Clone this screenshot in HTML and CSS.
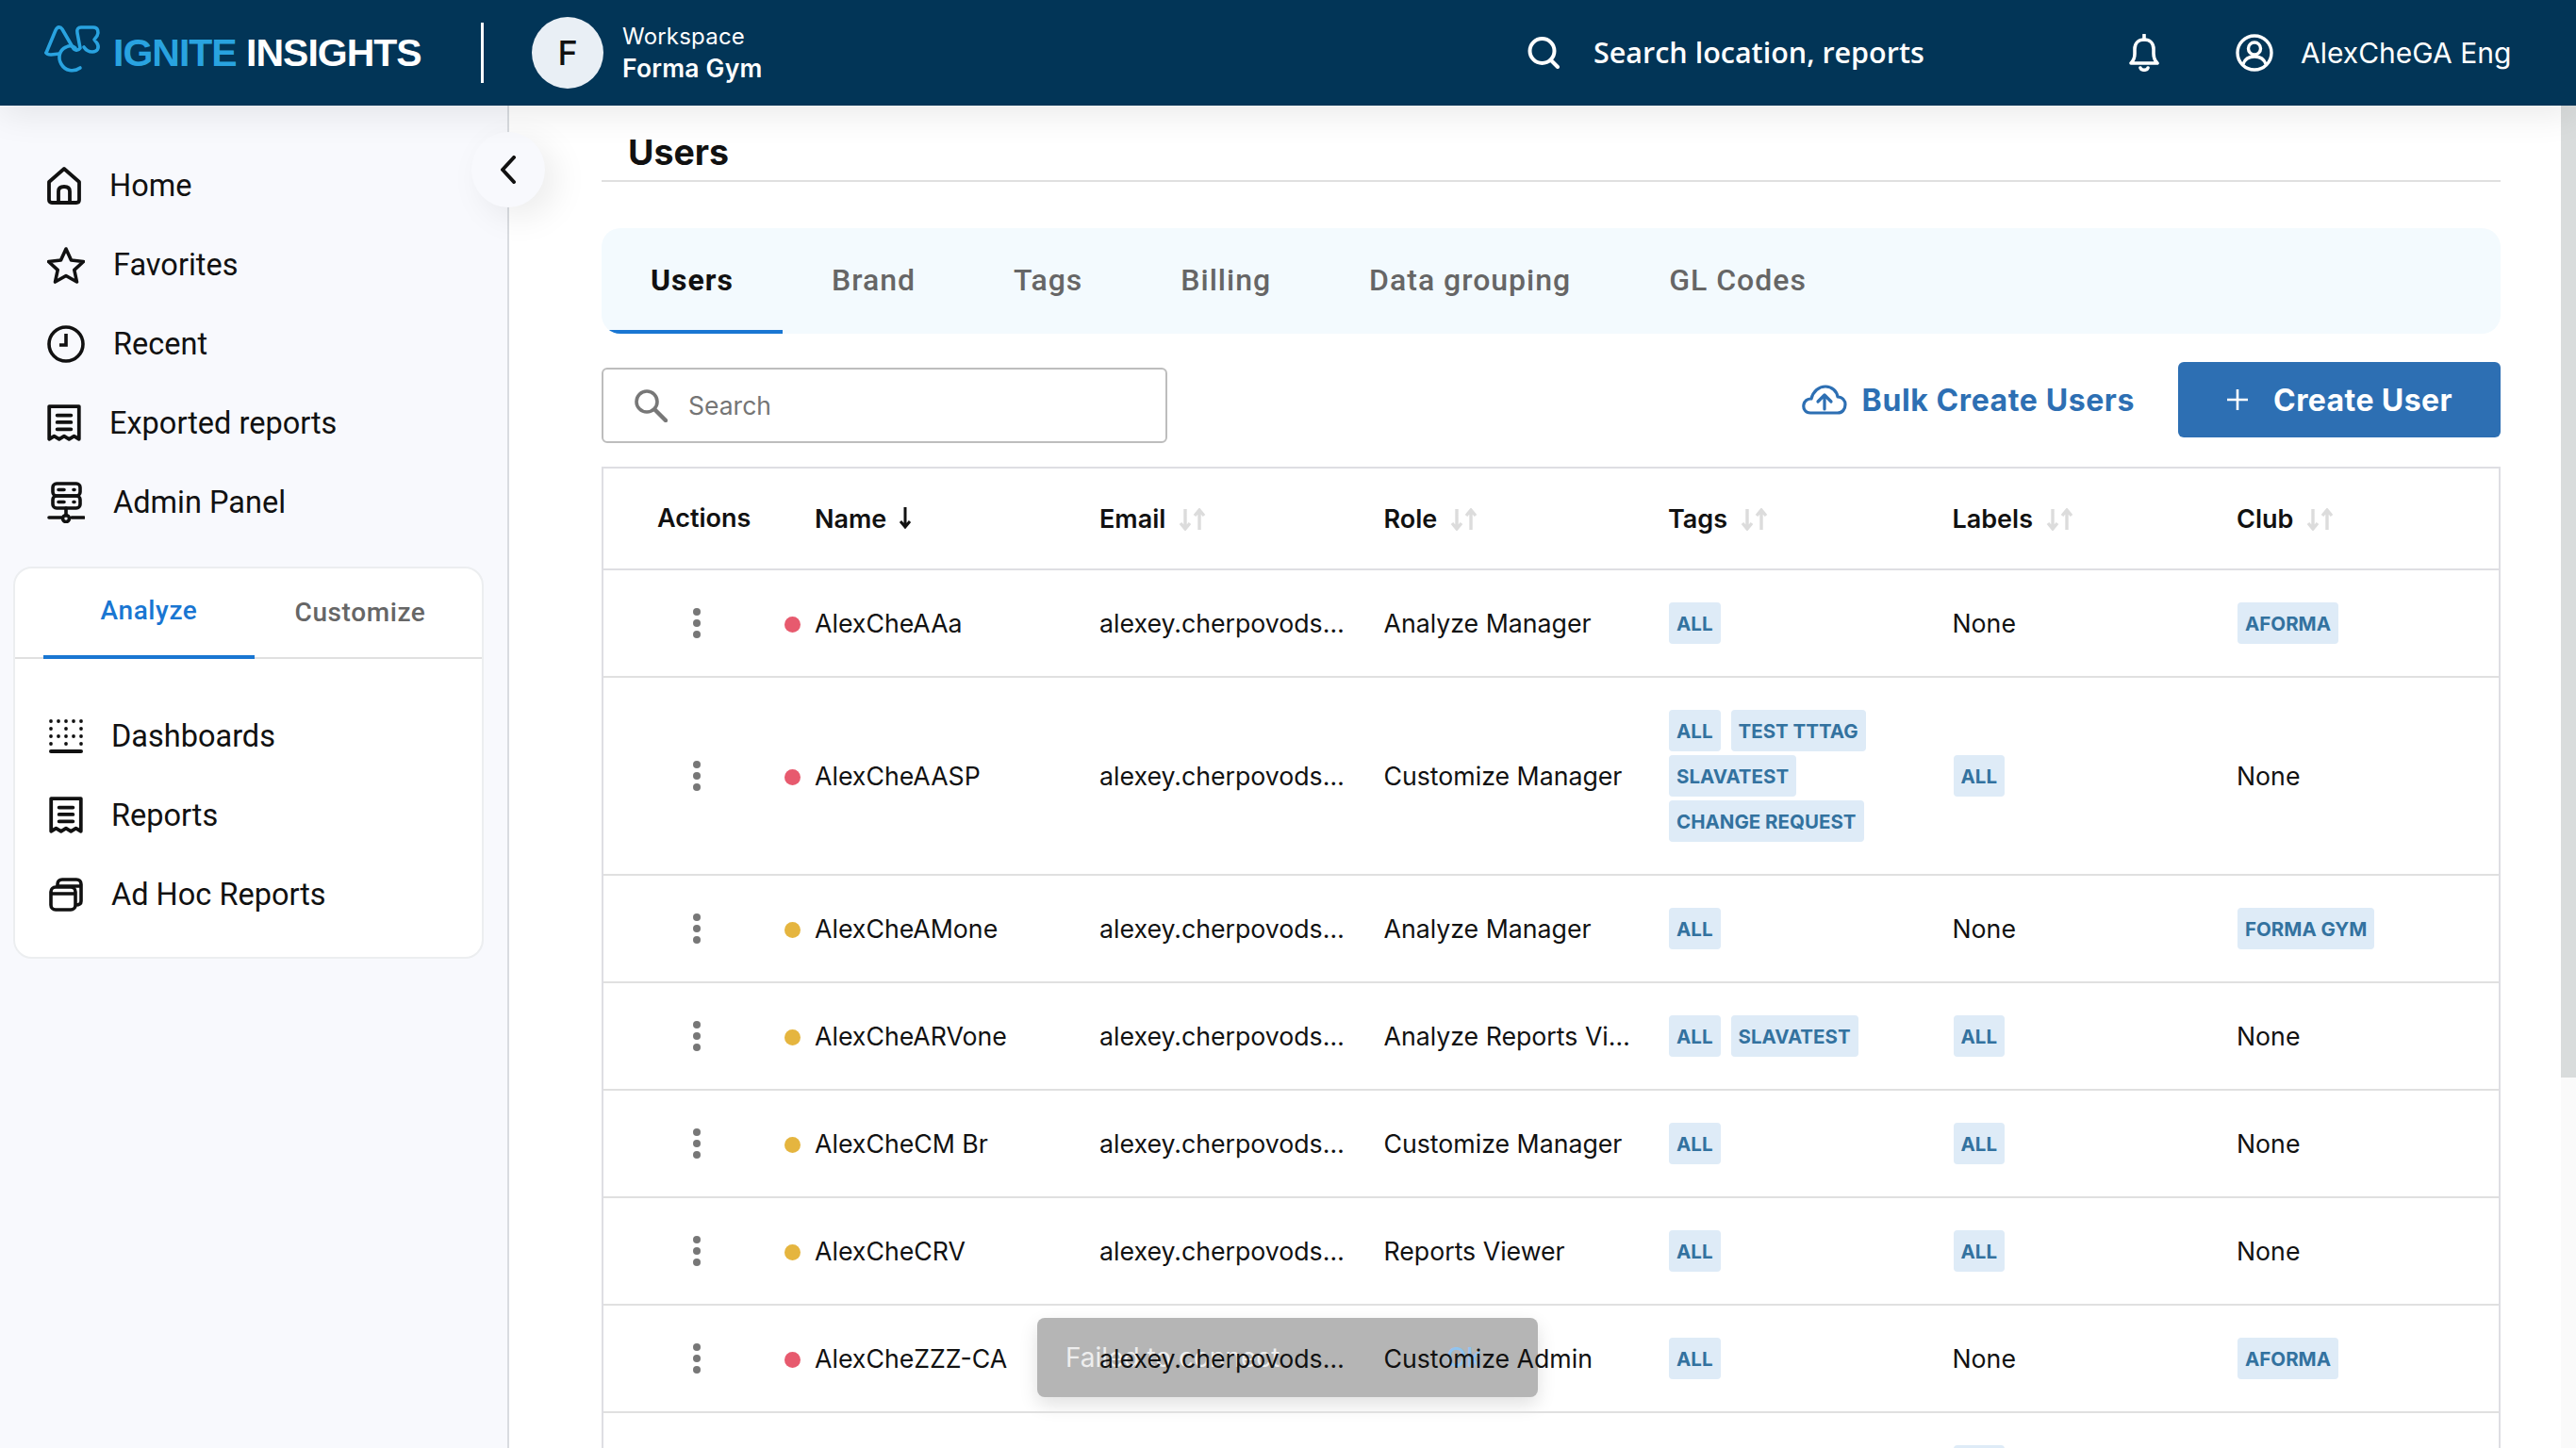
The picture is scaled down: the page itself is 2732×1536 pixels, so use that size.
FILE: index.html
```html
<!DOCTYPE html>
<html lang="en">
<head>
    <meta charset="UTF-8">
    <title>Ignite Insights - Users</title>
    <link rel="stylesheet" href="styles.css">
</head>
<body>
    <svg class="sprites" width="0" height="0">
        <symbol id="kebab" viewBox="0 0 8 32"><circle cx="4" cy="4" r="4"/><circle cx="4" cy="16" r="4"/><circle cx="4" cy="28" r="4"/></symbol>
        <symbol id="sort" viewBox="0 0 30 24"><path d="M7 1v20M2 16l5 6 5-6M22 23V2M17 8l5-6 5 6" fill="none" stroke="currentColor" stroke-width="3.4"/></symbol>
        <symbol id="receipt" viewBox="0 0 34 38"><path d="M2 2h30v33l-5-3-5 3-5-3-5 3-5-3-5 3z M10 11h14M10 18h14M10 25h14" fill="none" stroke="currentColor" stroke-width="3.600" stroke-linejoin="round" stroke-linecap="round"/></symbol>
    </svg>

    <header class="topbar">
        <div class="brand">
            <svg class="logo" viewBox="0 0 62 54" fill="none" stroke="#29a3e0" stroke-width="3.6" stroke-linecap="round" stroke-linejoin="round">
                <path d="M3 30 13 6c2-4 5-4 7-1l11 19c2 4 6 4 8 1l-3-16c-1-4 1-6 4-6h13c5 0 6 5 4 9l-3 4 3 4c3 5 0 9-5 9-4 0-7-2-9-5"/>
                <path d="M3 30c1 2 3 2 5 2l9-1"/>
                <path d="M34 25c-2-2-6-3-10-1-7 3-9 11-5 18s13 9 20 4"/>
            </svg>
            <span class="brand-name"><b>IGNITE</b> INSIGHTS</span>
        </div>
        <div class="bar-divider"></div>
        <div class="avatar">F</div>
        <div class="workspace">
            <span>Workspace</span>
            <strong>Forma Gym</strong>
        </div>
        <div class="global-search">
            <svg viewBox="0 0 34 34" fill="none" stroke="#fff" stroke-width="4" stroke-linecap="round"><circle cx="15.5" cy="15" r="13"/><path d="M25 25l7 7"/></svg>
            <span>Search location, reports</span>
        </div>
        <svg class="bell" viewBox="0 0 32 40" fill="none" stroke="#fff" stroke-width="3.6" stroke-linejoin="round"><path d="M2 31c3-3 4-5 4-10v-5c0-6 4-10 10-10s10 4 10 10v5c0 5 1 7 4 10z"/><path d="M16 1v5M12 36c1 3 7 3 8 0" stroke-linecap="round"/></svg>
        <svg class="account" viewBox="0 0 40 40" fill="none" stroke="#fff" stroke-width="3.4"><circle cx="20" cy="20" r="18"/><circle cx="20" cy="15.500" r="6.500"/><path d="M8 32c2-6 7-8 12-8s10 2 12 8"/></svg>
        <span class="account-name">AlexCheGA Eng</span>
    </header>

    <div class="layout">
        <aside class="sidebar">
            <nav class="nav">
                <a class="nav-item"><svg class="nav-icon icon-narrow" viewBox="0 0 36 40" fill="none" stroke="currentColor" stroke-width="3.8" stroke-linejoin="round"><path d="M2 16 18 2l16 14v19c0 2-1 3-3 3H5c-2 0-3-1-3-3z"/><path d="M12 38V26c0-3 2-5 6-5s6 2 6 5v12"/></svg>Home</a>
                <a class="nav-item"><svg class="nav-icon" viewBox="0 0 40 38" fill="none" stroke="currentColor" stroke-width="3.6" stroke-linejoin="round"><path d="M20 2l5.500 12 13 1.500-9.700 8.800 2.700 12.700L20 30.500 8.500 37l2.700-12.700-9.700-8.800 13-1.500z"/></svg>Favorites</a>
                <a class="nav-item"><svg class="nav-icon" viewBox="0 0 40 40" fill="none" stroke="currentColor" stroke-width="3.6"><circle cx="20" cy="20" r="18"/><path d="M20 9v12h-7"/></svg>Recent</a>
                <a class="nav-item"><svg class="nav-icon icon-narrow"><use href="#receipt"/></svg>Exported reports</a>
                <a class="nav-item"><svg class="nav-icon icon-tall" viewBox="0 0 40 44" fill="none" stroke="currentColor" stroke-width="3.6" stroke-linecap="round"><rect x="6" y="2" width="29" height="13" rx="4"/><rect x="6" y="15" width="29" height="13" rx="4"/><path d="M12 8.500h6M12 21.500h6M28 8.500h1M28 21.500h1M20 28v8M2 38h13M26 38h13"/><circle cx="20" cy="39" r="3.500"/></svg>Admin Panel</a>
            </nav>

            <section class="side-card">
                <div class="side-tabs">
                    <div class="side-tab active">Analyze</div>
                    <div class="side-tab">Customize</div>
                </div>
                <div class="side-list">
                    <a class="side-item"><svg class="nav-icon icon-narrow" viewBox="0 0 36 36" fill="currentColor"><g><circle cx="2" cy="2" r="1.900"/><circle cx="10" cy="2" r="1.900"/><circle cx="18" cy="2" r="1.900"/><circle cx="26" cy="2" r="1.900"/><circle cx="34" cy="2" r="1.900"/><circle cx="2" cy="10" r="1.900"/><circle cx="18" cy="10" r="1.900"/><circle cx="34" cy="10" r="1.900"/><circle cx="2" cy="18" r="1.900"/><circle cx="10" cy="18" r="1.900"/><circle cx="18" cy="18" r="1.900"/><circle cx="26" cy="18" r="1.900"/><circle cx="34" cy="18" r="1.900"/><circle cx="2" cy="26" r="1.900"/><circle cx="18" cy="26" r="1.900"/><circle cx="34" cy="26" r="1.900"/></g><rect x="0" y="32" width="36" height="4" rx="2"/></svg>Dashboards</a>
                    <a class="side-item"><svg class="nav-icon icon-narrow"><use href="#receipt"/></svg>Reports</a>
                    <a class="side-item"><svg class="nav-icon icon-narrow" viewBox="0 0 36 36" fill="none" stroke="currentColor" stroke-width="3.6" stroke-linejoin="round"><rect x="2" y="10" width="26" height="24" rx="5"/><path d="M2 17h26M9 10V7c0-3 2-5 5-5h15c3 0 5 2 5 5v18c0 3-2 4-6 4M9 9h25"/></svg>Ad Hoc Reports</a>
                </div>
            </section>

            <button class="collapse-btn"><svg viewBox="0 0 18 30" fill="none" stroke="#111" stroke-width="4" stroke-linecap="round" stroke-linejoin="round"><path d="M15 2 3 15l12 13"/></svg></button>
        </aside>

        <main class="content">
            <h1 class="page-title">Users</h1>

            <div class="tabs">
                <div class="tab active">Users</div>
                <div class="tab">Brand</div>
                <div class="tab">Tags</div>
                <div class="tab">Billing</div>
                <div class="tab">Data grouping</div>
                <div class="tab">GL Codes</div>
            </div>

            <div class="toolbar">
                <label class="search-box">
                    <svg viewBox="0 0 36 36" fill="none" stroke="#777" stroke-width="3.6" stroke-linecap="round"><circle cx="14" cy="14" r="11"/><path d="M23 23l11 11" stroke-width="4.500"/></svg>
                    <span>Search</span>
                </label>
                <div class="actions">
                    <a class="bulk-link"><svg viewBox="0 0 48 32" fill="none" stroke="#2d6fb3" stroke-width="3.2" stroke-linecap="round" stroke-linejoin="round"><path d="M12 30H9c-5 0-8-4-7-9 1-4 4-6 8-6 2-8 8-13 15-13 7 0 12 5 13 11 5 0 8 4 8 8 0 5-3 9-8 9z"/><path d="M24 26V12M17 18l7-7 7 7"/></svg>Bulk Create Users</a>
                    <button class="create-btn"><svg viewBox="0 0 24 24" fill="none" stroke="#fff" stroke-width="2.600"><path d="M12 1v22M1 12h22"/></svg>Create User</button>
                </div>
            </div>

            <div class="table-wrap">
                <table class="users">
                    <colgroup>
                        <col class="col-actions"><col class="col-name"><col class="col-std"><col class="col-std"><col class="col-std"><col class="col-std"><col>
                    </colgroup>
                    <thead>
                        <tr>
                            <th class="th-actions">Actions</th>
                            <th class="th-name">Name <svg class="sort on" viewBox="0 0 14 24" fill="none" stroke="#111" stroke-width="3"><path d="M7 1v20M2 16l5 6 5-6"/></svg></th>
                            <th>Email <svg class="sort"><use href="#sort"/></svg></th>
                            <th>Role <svg class="sort"><use href="#sort"/></svg></th>
                            <th>Tags <svg class="sort"><use href="#sort"/></svg></th>
                            <th>Labels <svg class="sort"><use href="#sort"/></svg></th>
                            <th>Club <svg class="sort"><use href="#sort"/></svg></th>
                        </tr>
                    </thead>
                    <tbody>
                        <tr>
                            <td class="td-actions"><svg class="kebab"><use href="#kebab"/></svg></td>
                            <td class="td-name"><i class="dot red"></i>AlexCheAAa</td>
                            <td><div class="clip">alexey.cherpovodskiy@forma.com</div></td>
                            <td><div class="clip">Analyze Manager</div></td>
                            <td><div class="chips"><span class="chip">ALL</span></div></td>
                            <td>None</td>
                            <td><div class="chips"><span class="chip">AFORMA</span></div></td>
                        </tr>
                        <tr>
                            <td class="td-actions"><svg class="kebab"><use href="#kebab"/></svg></td>
                            <td class="td-name"><i class="dot red"></i>AlexCheAASP</td>
                            <td><div class="clip">alexey.cherpovodskiy@forma.com</div></td>
                            <td><div class="clip">Customize Manager</div></td>
                            <td><div class="chips"><span class="chip">ALL</span><span class="chip">TEST TTTAG</span><span class="chip">SLAVATEST</span><span class="chip">CHANGE REQUEST</span></div></td>
                            <td><div class="chips"><span class="chip">ALL</span></div></td>
                            <td>None</td>
                        </tr>
                        <tr>
                            <td class="td-actions"><svg class="kebab"><use href="#kebab"/></svg></td>
                            <td class="td-name"><i class="dot amber"></i>AlexCheAMone</td>
                            <td><div class="clip">alexey.cherpovodskiy@forma.com</div></td>
                            <td><div class="clip">Analyze Manager</div></td>
                            <td><div class="chips"><span class="chip">ALL</span></div></td>
                            <td>None</td>
                            <td><div class="chips"><span class="chip">FORMA GYM</span></div></td>
                        </tr>
                        <tr>
                            <td class="td-actions"><svg class="kebab"><use href="#kebab"/></svg></td>
                            <td class="td-name"><i class="dot amber"></i>AlexCheARVone</td>
                            <td><div class="clip">alexey.cherpovodskiy@forma.com</div></td>
                            <td><div class="clip">Analyze Reports Viewer</div></td>
                            <td><div class="chips"><span class="chip">ALL</span><span class="chip">SLAVATEST</span></div></td>
                            <td><div class="chips"><span class="chip">ALL</span></div></td>
                            <td>None</td>
                        </tr>
                        <tr>
                            <td class="td-actions"><svg class="kebab"><use href="#kebab"/></svg></td>
                            <td class="td-name"><i class="dot amber"></i>AlexCheCM Br</td>
                            <td><div class="clip">alexey.cherpovodskiy@forma.com</div></td>
                            <td><div class="clip">Customize Manager</div></td>
                            <td><div class="chips"><span class="chip">ALL</span></div></td>
                            <td><div class="chips"><span class="chip">ALL</span></div></td>
                            <td>None</td>
                        </tr>
                        <tr>
                            <td class="td-actions"><svg class="kebab"><use href="#kebab"/></svg></td>
                            <td class="td-name"><i class="dot amber"></i>AlexCheCRV</td>
                            <td><div class="clip">alexey.cherpovodskiy@forma.com</div></td>
                            <td><div class="clip">Reports Viewer</div></td>
                            <td><div class="chips"><span class="chip">ALL</span></div></td>
                            <td><div class="chips"><span class="chip">ALL</span></div></td>
                            <td>None</td>
                        </tr>
                        <tr>
                            <td class="td-actions"><svg class="kebab"><use href="#kebab"/></svg></td>
                            <td class="td-name"><i class="dot red"></i>AlexCheZZZ-CA</td>
                            <td><div class="clip">alexey.cherpovodskiy@forma.com</div></td>
                            <td><div class="clip">Customize Admin</div></td>
                            <td><div class="chips"><span class="chip">ALL</span></div></td>
                            <td>None</td>
                            <td><div class="chips"><span class="chip">AFORMA</span></div></td>
                        </tr>
                        <tr>
                            <td></td><td></td><td></td><td></td><td></td>
                            <td><div class="chips"><span class="chip">ALL</span></div></td>
                            <td></td>
                        </tr>
                    </tbody>
                </table>
                <div class="toast"><span>Failed to connect</span><em>Ok</em></div>
            </div>
        </main>

        <div class="scrollbar"><div class="scroll-thumb"></div></div>
    </div>
</body>
</html>
```

FILE: styles.css
```css
* {
    box-sizing: border-box;
}

html, body {
    height: 100%;
}

body {
    margin: 0;
    overflow: hidden;
    font-family: Inter, "Liberation Sans", sans-serif;
    color: #111;
    background: #fff;
}

.sprites {
    position: absolute;
}

/* Top bar */
.topbar {
    height: 112px;
    display: flex;
    align-items: center;
    background: #023557;
    color: #fff;
    position: relative;
    z-index: 3;
    box-shadow: 0 8px 36px rgba(0, 0, 0, 0.09);
}

.brand {
    display: flex;
    align-items: center;
    width: 510px;
    padding-left: 46px;
}

.logo {
    width: 62px;
    height: 54px;
    margin-top: -6px;
    flex: none;
}

.brand-name {
    margin-left: 12px;
    font-family: "Liberation Sans", Arial, sans-serif;
    font-weight: 700;
    font-size: 41px;
    letter-spacing: -1px;
    white-space: nowrap;
}

.brand-name b {
    color: #29a3e0;
}

.bar-divider {
    width: 3px;
    height: 64px;
    background: #fff;
    flex: none;
}

.avatar {
    width: 76px;
    height: 76px;
    margin-left: 51px;
    border-radius: 50%;
    background: #e9eff5;
    color: #111;
    font-size: 36px;
    font-weight: 500;
    display: flex;
    align-items: center;
    justify-content: center;
    flex: none;
}

.workspace {
    margin-left: 20px;
    width: 400px;
    display: flex;
    flex-direction: column;
    gap: 3px;
    font-size: 24px;
    letter-spacing: 0.2px;
}

.workspace strong {
    font-size: 26.5px;
    font-weight: 600;
}

.global-search {
    display: flex;
    align-items: center;
    gap: 36px;
    width: 638px;
    margin-left: 560px;
    flex: none;
    font-family: "Open Sans", sans-serif;
    font-size: 30.5px;
    font-weight: 600;
}

.global-search svg {
    width: 34px;
    height: 34px;
}

.global-search span {
    margin-bottom: 2px;
}

.bell {
    width: 32px;
    height: 40px;
    flex: none;
}

.account {
    width: 40px;
    height: 40px;
    margin-left: 81px;
    flex: none;
}

.account-name {
    margin-left: 29px;
    font-size: 30px;
    white-space: nowrap;
}

/* Page layout */
.layout {
    display: flex;
    height: calc(100vh - 112px);
}

.sidebar {
    width: 540px;
    flex: none;
    background: #f8f9fd;
    border-right: 2px solid #d9dce0;
    padding: 43px 0 0 14px;
    position: relative;
}

.nav {
    display: flex;
    flex-direction: column;
    padding-left: 36px;
}

.nav-item, .side-item {
    display: flex;
    align-items: center;
    gap: 30px;
    height: 84px;
    font-family: Roboto, sans-serif;
    font-size: 32.5px;
    color: #111;
}

.nav-icon {
    width: 40px;
    height: 40px;
    flex: none;
}

.icon-narrow {
    width: 36px;
}

.icon-tall {
    height: 44px;
}

.side-card {
    width: 499px;
    height: 416px;
    margin-top: 26px;
    background: #fff;
    border: 2px solid #eceef0;
    border-radius: 20px;
}

.side-tabs {
    display: flex;
    height: 96px;
    padding-left: 30px;
    border-bottom: 2px solid #e0e0e0;
}

.side-tab {
    width: 224px;
    height: 96px;
    display: flex;
    align-items: center;
    justify-content: center;
    padding-bottom: 4px;
    font-family: Roboto, sans-serif;
    font-size: 28px;
    font-weight: 500;
    letter-spacing: 0.6px;
    color: #666;
}

.side-tab.active {
    color: #1976d2;
    border-bottom: 4px solid #1976d2;
}

.side-list {
    display: flex;
    flex-direction: column;
    padding: 40px 0 0 36px;
}

.collapse-btn {
    position: absolute;
    top: 28px;
    right: -40px;
    width: 78px;
    height: 80px;
    padding: 0;
    border: none;
    border-radius: 50%;
    background: #f8f9fd;
    box-shadow: 12px 10px 36px rgba(0, 0, 0, 0.08);
    display: flex;
    align-items: center;
    justify-content: center;
}

.collapse-btn svg {
    width: 18px;
    height: 30px;
}

/* Main column */
.content {
    flex: 1;
    min-width: 0;
    padding: 0 64px 0 98px;
    overflow: hidden;
}

.page-title {
    margin: 0;
    height: 81px;
    padding: 28px 0 0 28px;
    border-bottom: 2px solid #e0e0e0;
    font-size: 37.5px;
    font-weight: 700;
    line-height: 44px;
}

.tabs {
    display: flex;
    height: 112px;
    margin-top: 49px;
    background: #f3fafe;
    border-radius: 20px;
    overflow: hidden;
}

.tab {
    display: flex;
    align-items: center;
    padding: 2px 52px 0;
    font-family: Roboto, sans-serif;
    font-size: 32px;
    font-weight: 500;
    letter-spacing: 1px;
    color: #666;
    border-bottom: 4px solid transparent;
}

.tab.active {
    color: #111;
    font-weight: 700;
    border-bottom-color: #1976d2;
}

.toolbar {
    display: flex;
    justify-content: space-between;
    margin-top: 30px;
}

.search-box {
    width: 600px;
    height: 80px;
    margin-top: 6px;
    border: 2px solid #bdbdbd;
    border-radius: 6px;
    display: flex;
    align-items: center;
    gap: 22px;
    padding-left: 32px;
    color: #757575;
    font-size: 26.5px;
}

.search-box svg {
    width: 36px;
    height: 36px;
}

.actions {
    display: flex;
    align-items: flex-start;
    gap: 46px;
}

.bulk-link {
    display: flex;
    align-items: center;
    height: 80px;
    gap: 16px;
    color: #2d6fb3;
    font-size: 32px;
    font-weight: 700;
    letter-spacing: 0.6px;
}

.bulk-link svg {
    width: 48px;
    height: 32px;
}

.create-btn {
    width: 342px;
    height: 80px;
    border: none;
    border-radius: 6px;
    background: #2d6fb3;
    color: #fff;
    display: flex;
    align-items: center;
    justify-content: center;
    gap: 26px;
    font-family: Inter, sans-serif;
    font-size: 32px;
    font-weight: 700;
    letter-spacing: 0.4px;
}

.create-btn svg {
    width: 24px;
    height: 24px;
}

/* Users table */
.table-wrap {
    position: relative;
    margin-top: 25px;
    border: 2px solid #dedee3;
    border-bottom: none;
}

.users {
    position: relative;
    z-index: 1;
    width: 100%;
    table-layout: fixed;
    border-collapse: separate;
    border-spacing: 0;
    font-size: 26.7px;
}

.col-actions {
    width: 191px;
}

.col-name {
    width: 335px;
}

.col-std {
    width: 301.500px;
}

.users th {
    height: 108px;
    padding: 0;
    text-align: left;
    font-size: 27px;
    font-weight: 600;
    white-space: nowrap;
    border-bottom: 2px solid #dedee3;
}

.users th.th-actions {
    padding: 0 0 1px 57px;
}

.users th.th-name {
    padding-left: 33px;
}

.users td {
    height: 114px;
    padding: 0 30px 0 0;
    border-bottom: 2px solid #e0e0e0;
}

.users td.td-actions {
    padding: 0 0 0 95px;
}

.users td.td-name {
    padding: 0;
    white-space: nowrap;
}

.sort {
    width: 32px;
    height: 24px;
    margin-left: 6px;
    vertical-align: -3px;
    color: #dcdcdc;
}

.sort.on {
    width: 14px;
    margin-left: 6px;
    vertical-align: -1px;
}

.kebab {
    display: block;
    width: 8px;
    height: 32px;
    fill: #777;
}

.dot {
    display: inline-block;
    width: 17px;
    height: 17px;
    margin: 0 15px 0 1px;
    border-radius: 50%;
}

.dot.red {
    background: #e75a6e;
}

.dot.amber {
    background: #e5b53f;
}

.clip {
    max-width: 262px;
    overflow: hidden;
    text-overflow: ellipsis;
    white-space: nowrap;
}

.chips {
    display: flex;
    flex-wrap: wrap;
    gap: 4px 11px;
    padding: 34px 0 34px 1px;
}

.chip {
    display: flex;
    align-items: center;
    height: 44px;
    padding: 0 8px;
    border-radius: 4px;
    background: #deebf7;
    color: #33729f;
    font-size: 20.5px;
    font-weight: 700;
    white-space: nowrap;
}

.toast {
    position: absolute;
    left: 460px;
    top: 901px;
    width: 531px;
    height: 84px;
    padding: 0 60px 0 30px;
    display: flex;
    align-items: center;
    justify-content: space-between;
    border-radius: 8px;
    background: #b5b5b5;
    color: #eee;
    font-size: 28px;
    box-shadow: 0 8px 20px rgba(0, 0, 0, 0.12);
}

.toast em {
    font-style: normal;
    color: #90c4f0;
    font-weight: 500;
}

.scrollbar {
    width: 16px;
    flex: none;
    background: #fafafa;
}

.scroll-thumb {
    height: 1031px;
    background: #d9dcdc;
}
```
